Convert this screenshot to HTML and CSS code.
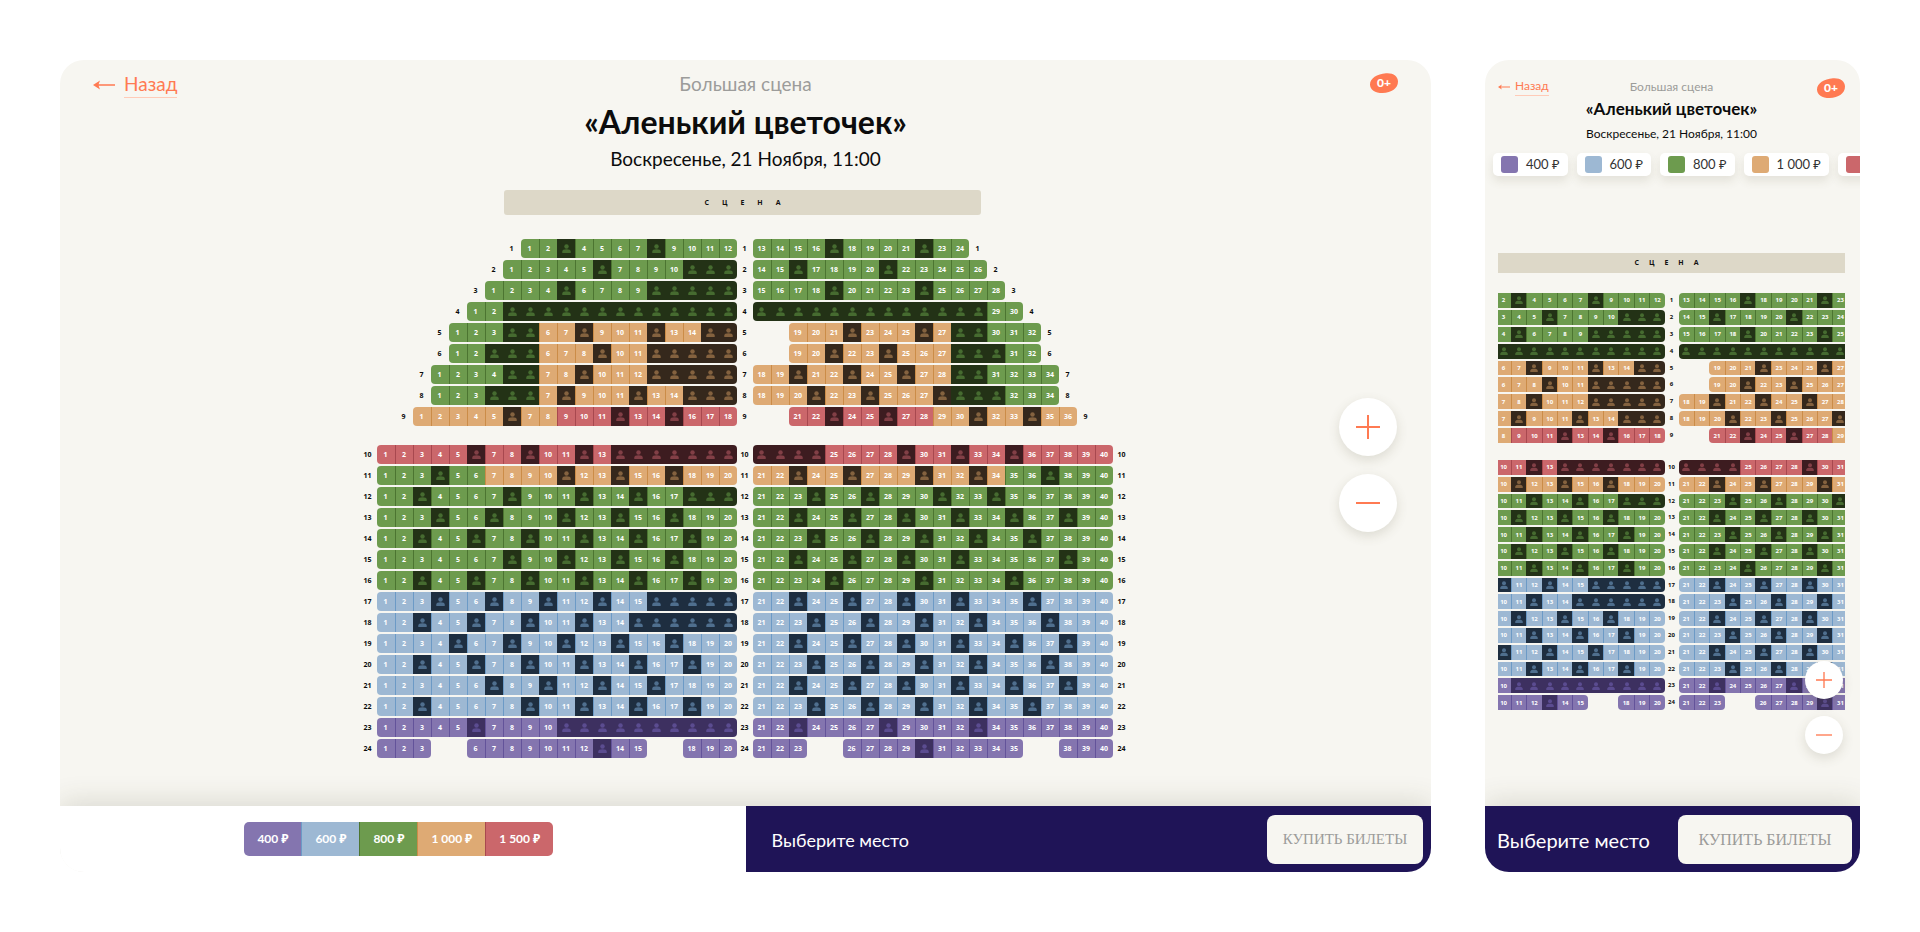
FILE: index.html
```html
<!DOCTYPE html>
<html lang="ru">
<head>
<meta charset="utf-8">
<title>«Аленький цветочек» — выбор мест</title>
<meta name="viewport" content="width=device-width, initial-scale=1">
<link rel="stylesheet" href="styles.css">
</head>
<body>
<svg class="sprite" aria-hidden="true">
  <symbol id="person" viewBox="0 0 10 10"><circle cx="5" cy="2.700" r="2.500"/><path d="M0.300 10V8.400C0.300 6.600 2 5.800 5 5.800S9.700 6.600 9.700 8.400V10Z"/></symbol>
  <symbol id="arrow" viewBox="0 0 22 10"><path d="M0 5 7 0.5 5.6 4.2H22V5.8H5.6L7 9.5Z"/></symbol>
  <symbol id="plus" viewBox="0 0 24 24"><path d="M11 0h2v11h11v2H13v11h-2V13H0v-2h11z"/></symbol>
  <symbol id="minus" viewBox="0 0 24 24"><path d="M0 11h24v2H0z"/></symbol>
  <symbol id="blob" viewBox="0 0 28 20"><path d="M16 0.2C23 -0.4 28 3 28 8.6 28 15.4 21.500 20 12.600 20 5 20 0 16.500 0 11.400 0 5.500 7 0.800 16 0.200Z"/></symbol>
</svg>

<main class="page">
  <section class="card card--wide">
    <header class="head">
      <a class="back" href="#"><svg class="back__arrow"><use href="#arrow"/></svg><span class="back__text">Назад</span></a>
      <div class="show">
        <p class="show__hall">Большая сцена</p>
        <h1 class="show__title">«Аленький цветочек»</h1>
        <p class="show__date">Воскресенье, 21 Ноября, 11:00</p>
      </div>
      <span class="age"><svg class="age__shape" preserveAspectRatio="none"><use href="#blob"/></svg><span class="age__text">0+</span></span>
    </header>
    <div class="hall">
      <div class="stage">СЦЕНА</div>
      <div class="plan" data-plan></div>
    </div>
    <div class="zoom">
      <button class="zoom__btn" type="button" aria-label="Приблизить"><svg class="zoom__icon"><use href="#plus"/></svg></button>
      <button class="zoom__btn" type="button" aria-label="Отдалить"><svg class="zoom__icon"><use href="#minus"/></svg></button>
    </div>
    <footer class="foot">
      <div class="foot__prices">
        <ul class="prices">
          <li class="prices__item zone-p">400 ₽</li>
          <li class="prices__item zone-b">600 ₽</li>
          <li class="prices__item zone-g">800 ₽</li>
          <li class="prices__item zone-o">1 000 ₽</li>
          <li class="prices__item zone-r">1 500 ₽</li>
        </ul>
      </div>
      <div class="order">
        <span class="order__hint">Выберите место</span>
        <button class="order__buy" type="button">КУПИТЬ БИЛЕТЫ</button>
      </div>
    </footer>
  </section>

  <section class="card card--compact">
    <header class="head">
      <a class="back" href="#"><svg class="back__arrow"><use href="#arrow"/></svg><span class="back__text">Назад</span></a>
      <div class="show">
        <p class="show__hall">Большая сцена</p>
        <h2 class="show__title">«Аленький цветочек»</h2>
        <p class="show__date">Воскресенье, 21 Ноября, 11:00</p>
      </div>
      <span class="age"><svg class="age__shape"><use href="#blob"/></svg><span class="age__text">0+</span></span>
    </header>
    <ul class="chips">
      <li class="chip"><span class="chip__swatch zone-p"></span>400 ₽</li>
      <li class="chip"><span class="chip__swatch zone-b"></span>600 ₽</li>
      <li class="chip"><span class="chip__swatch zone-g"></span>800 ₽</li>
      <li class="chip"><span class="chip__swatch zone-o"></span>1 000 ₽</li>
      <li class="chip"><span class="chip__swatch zone-r"></span>1 500 ₽</li>
    </ul>
    <div class="hall">
      <div class="stage">СЦЕНА</div>
      <div class="plan" data-plan></div>
    </div>
    <div class="zoom">
      <button class="zoom__btn" type="button" aria-label="Приблизить"><svg class="zoom__icon"><use href="#plus"/></svg></button>
      <button class="zoom__btn" type="button" aria-label="Отдалить"><svg class="zoom__icon"><use href="#minus"/></svg></button>
    </div>
    <footer class="foot">
      <div class="order">
        <span class="order__hint">Выберите место</span>
        <button class="order__buy" type="button">КУПИТЬ БИЛЕТЫ</button>
      </div>
    </footer>
  </section>
</main>
<script src="seats.js"></script>
</body>
</html>
```
FILE: styles.css
```css
* { box-sizing: border-box; }

body {
  margin: 0;
  background: #fff;
  color: #0c0c0c;
  font-family: Lato, "Noto Sans", "DejaVu Sans", sans-serif;
}

p, h1, h2, ul { margin: 0; padding: 0; }
ul { list-style: none; }
button { font: inherit; border: 0; padding: 0; cursor: pointer; }
svg { fill: currentColor; display: block; }
.sprite { position: absolute; width: 0; height: 0; }

.zone-p { --seat: #8475af; --line: #63539a; --taken: #3d3060; --icon: #5b4c90; }
.zone-b { --seat: #9db8d3; --line: #6c9ac6; --taken: #1e2e40; --icon: #4f6f8e; }
.zone-g { --seat: #6d9b4e; --line: #4c7531; --taken: #233216; --icon: #466b30; }
.zone-o { --seat: #deaa74; --line: #cb8c48; --taken: #35281c; --icon: #84623f; }
.zone-r { --seat: #cb676b; --line: #a8484f; --taken: #3d1c20; --icon: #823f46; }

.page {
  display: flex;
  gap: 54px;
  padding: 60px;
}

.card {
  position: relative;
  display: flex;
  flex-direction: column;
  min-width: 0;
  min-height: calc(100vh - 121px);
  border-radius: 24px;
  background: #f7f6f1;
  overflow: hidden;
}
.card--wide { flex: 1; }
.card--compact { flex: 0 0 375px; }

/* header */
.head {
  display: grid;
  grid-template-columns: 1fr auto 1fr;
  align-items: start;
  padding: 12px 33px 0;
}
.back {
  display: flex;
  align-items: center;
  gap: 9px;
  justify-self: start;
  color: #ff7a52;
  font-size: 19px;
  line-height: 24px;
  text-decoration: none;
}
.back__arrow { width: 22px; height: 10px; }
.back__text { border-bottom: 1px solid #ffcbb8; padding-bottom: 1px; }
.show { text-align: center; }
.show__hall { color: #9c9c9a; font-size: 19px; line-height: 24px; }
.show__title { margin-top: 6px; font-size: 32px; line-height: 40px; font-weight: 700; }
.show__date { margin-top: 4px; font-size: 19px; line-height: 26px; }
.age {
  display: grid;
  place-items: center;
  justify-self: end;
  padding-top: 1px;
  color: #ff7a52;
}
.age__shape { grid-area: 1 / 1; width: 28px; height: 20px; }
.age__text { grid-area: 1 / 1; color: #fff; font-size: 12px; line-height: 20px; font-weight: 900; }

/* hall plan */
.hall {
  display: flex;
  flex: 1;
  flex-direction: column;
  align-items: center;
  padding: 18px 2px 48px 0;
}
.stage {
  width: 477px;
  border-radius: 3px;
  background: #ddd8c8;
  color: #111;
  font: 700 7px/25px "Open Sans", sans-serif;
  letter-spacing: 13px;
  text-indent: 13px;
  text-align: center;
}
.card--wide .stage { margin-right: 4px; }
.plan {
  --side: 378px;
  --aisle: 16px;
  display: grid;
  gap: 19px;
  margin-top: 24px;
  font: 700 7px/19px "Open Sans", sans-serif;
}
.block { display: grid; grid-auto-rows: 1fr; gap: 2px; }
.row { display: grid; grid-template-columns: var(--side) var(--aisle) var(--side); }
.side { display: flex; }
.side--left { justify-content: flex-end; }
.row__no { text-align: center; }
.side .row__no, .seat, .space { flex: 0 0 calc(100% / 21); }
.seat {
  display: grid;
  place-items: center;
  min-width: 0;
  border-left: 1px solid var(--line);
  background: var(--seat);
  color: #fff;
}
.seat:disabled { background: var(--taken); border-color: var(--taken); color: var(--icon); cursor: default; }
.seat--first { border-left: 0; border-radius: 4px 0 0 4px; }
.seat--last { border-radius: 0 4px 4px 0; }
.seat__person { width: 9px; height: 9px; }

/* zoom */
.zoom {
  position: absolute;
  right: 34px;
  top: 338px;
  display: grid;
  gap: 18px;
}
.zoom__btn {
  display: grid;
  place-items: center;
  width: 58px;
  height: 58px;
  border-radius: 50%;
  background: #fff;
  color: #ff7a52;
  box-shadow: 0 4px 12px rgba(90, 80, 50, .16);
}
.zoom__icon { width: 24px; height: 24px; }

/* footer */
.foot {
  position: relative;
  display: grid;
  grid-auto-flow: column;
  grid-auto-columns: minmax(0, 1fr);
  background: #fff;
  box-shadow: 0 -4px 28px rgba(70, 70, 40, .16);
}
.foot__prices { display: grid; place-items: center; padding-right: 8px; }
.prices { display: flex; border-radius: 5px; overflow: hidden; }
.prices__item {
  padding: 0 13px;
  border-left: 1px solid var(--line);
  background: var(--seat);
  color: #fff;
  font-size: 12px;
  line-height: 34px;
  font-weight: 700;
}
.prices__item:first-child { border-left: 0; }
.order {
  display: flex;
  align-items: center;
  justify-content: space-between;
  padding: 9px 8px 8px 26px;
  background: #1f1457;
  color: #fff;
}
.order__hint { font-size: 18px; }
.order__buy {
  width: 156px;
  height: 49px;
  border-radius: 8px;
  background: #f7f6f1;
  color: #9c9c9a;
  font: 15px "Liberation Serif", serif;
}

/* compact card */
.card--compact .head { padding: 18px 15px 0 13px; }
.card--compact .back { gap: 5px; font-size: 12px; line-height: 16px; }
.card--compact .back__arrow { width: 12px; height: 6px; }
.card--compact .show__hall { font-size: 12px; line-height: 18px; }
.card--compact .show__title { margin-top: 3px; font-size: 17px; line-height: 20px; }
.card--compact .show__date { margin-top: 7px; font-size: 12px; line-height: 16px; }
.card--compact .age { padding: 0; }
.card--compact .age__text { line-height: 18px; }
.chips { display: flex; gap: 9px; padding: 11px 0 0 8px; }
.chip {
  display: flex;
  flex: none;
  align-items: center;
  gap: 8px;
  padding: 0 8px;
  border-radius: 5px;
  background: #fff;
  color: #333;
  font-size: 13px;
  line-height: 23px;
  box-shadow: 0 5px 10px rgba(90, 80, 50, .12);
}
.chip__swatch { width: 17px; height: 17px; border-radius: 3px; background: var(--seat); }
.card--compact .hall { margin: 0 15px 0 13px; padding: 77px 0 0; overflow: hidden; }
.card--compact .stage { width: 100%; border-radius: 0; line-height: 20px; letter-spacing: 10px; text-indent: 0; }
.card--compact .plan {
  --side: 323px;
  --aisle: 14px;
  gap: 17px;
  margin-top: 20px;
  font-size: 6px;
  line-height: 14px;
}
.card--compact .seat__person { width: 8px; height: 8px; }
.card--compact .block { height: 250px; }
.card--compact .block--front { height: 150px; }
.card--compact .zoom { right: 17px; top: 601px; gap: 17px; }
.card--compact .zoom__btn { width: 38px; height: 38px; }
.card--compact .zoom__icon { width: 16px; height: 16px; }
.card--compact .order { padding-left: 12px; }
.card--compact .order__hint { font-size: 20px; }
.card--compact .order__buy { width: 174px; font-size: 16px; }
```
FILE: seats.js
```js
// Each row: number of the last seat before the aisle, price zones, taken seats.
// Numbers that belong to no zone are empty places.
const rows = [
  [12, 'g1-24', '3 8 17 22'],
  [13, 'g1-26', '6 11-13 16 21'],
  [14, 'g1-28', '5 10-14 19 24'],
  [15, 'g1-30', '3-28'],
  [16, 'g1-5 o6-16 o19-27 g28-32', '4-5 8 12 15-16 22 26 28-29'],
  [16, 'g1-5 o6-16 o19-27 g28-32', '3-5 9 12-16 21 24 28-30'],
  [17, 'g1-6 o7-28 g29-34', '5-6 9 13-17 20 23 26 29-30'],
  [17, 'g1-6 o7-28 g29-34', '4-6 8 12 15-17 21 24 28-31'],
  [18, 'o1-8 r9-18 r21-28 o29-36', '6 12 15 23 26 31 34'],
  [20, 'r1-40', '6 9 12 14-24 29 32 35'],
  [20, 'g1-6 o7-34 g35-40', '4 11 14 17 23 26 30 33 37'],
  [20, 'g1-40', '3 8 12 15 18-20 24 27 31 34'],
  [20, 'g1-40', '4 7 11 14 17 23 26 29 32 35 38'],
  [20, 'g1-40', '3 6 9 12 15 18 24 27 30 33 36'],
  [20, 'g1-40', '8 11 14 17 23 26 29 32 38'],
  [20, 'g1-40', '3 6 9 12 15 18 25 30 35'],
  [20, 'b1-40', '4 7 10 13 16-20 23 26 29 32 36'],
  [20, 'b1-40', '3 6 9 12 15-20 24 27 30 33 37'],
  [20, 'b1-40', '5 8 11 14 17 23 26 29 32 35 38'],
  [20, 'b1-40', '3 6 9 12 15 18 24 27 30 33 37'],
  [20, 'b1-40', '7 10 13 16 23 26 29 32 35 38'],
  [20, 'b1-40', '3 9 12 15 18 24 27 30 33 36'],
  [20, 'p1-40', '6 11-20 23 28 33'],
  [20, 'p1-3 p6-15 p18-23 p26-35 p38-40', '13 30']
];

function range(text) {
  const [from, to = from] = text.split('-').map(Number);
  return Array.from({ length: to - from + 1 }, (_, i) => from + i);
}

function sideHtml(rowNo, from, to, zones, taken) {
  let html = '';
  for (let n = from; n <= to; n++) {
    if (!zones[n]) {
      html += '<span class="space"></span>';
      continue;
    }
    const first = n === from || !zones[n - 1] ? ' seat--first' : '';
    const last = n === to || !zones[n + 1] ? ' seat--last' : '';
    const busy = taken.has(n);
    const inner = busy ? '<svg class="seat__person"><use href="#person"/></svg>' : n;
    html += `<button type="button" class="seat zone-${zones[n]}${first}${last}"` +
      ` aria-label="Ряд ${rowNo}, место ${n}"${busy ? ' disabled' : ''}>${inner}</button>`;
  }
  return html;
}

function rowHtml([split, zoneText, takenText], index) {
  const no = index + 1;
  const zones = {};
  zoneText.split(' ').forEach(z => range(z.slice(1)).forEach(n => { zones[n] = z[0]; }));
  const taken = new Set(takenText.split(' ').flatMap(range));
  const end = Math.max(...Object.keys(zones).map(Number));
  const label = `<span class="row__no">${no}</span>`;
  return `<div class="row"><div class="side side--left">${label}${sideHtml(no, 1, split, zones, taken)}</div>` +
    `${label}<div class="side">${sideHtml(no, split + 1, end, zones, taken)}${label}</div></div>`;
}

const html = rows.map(rowHtml);
const plan = `<div class="block block--front">${html.slice(0, 9).join('')}</div>` +
  `<div class="block">${html.slice(9).join('')}</div>`;
document.querySelectorAll('[data-plan]').forEach(el => { el.innerHTML = plan; });
```
